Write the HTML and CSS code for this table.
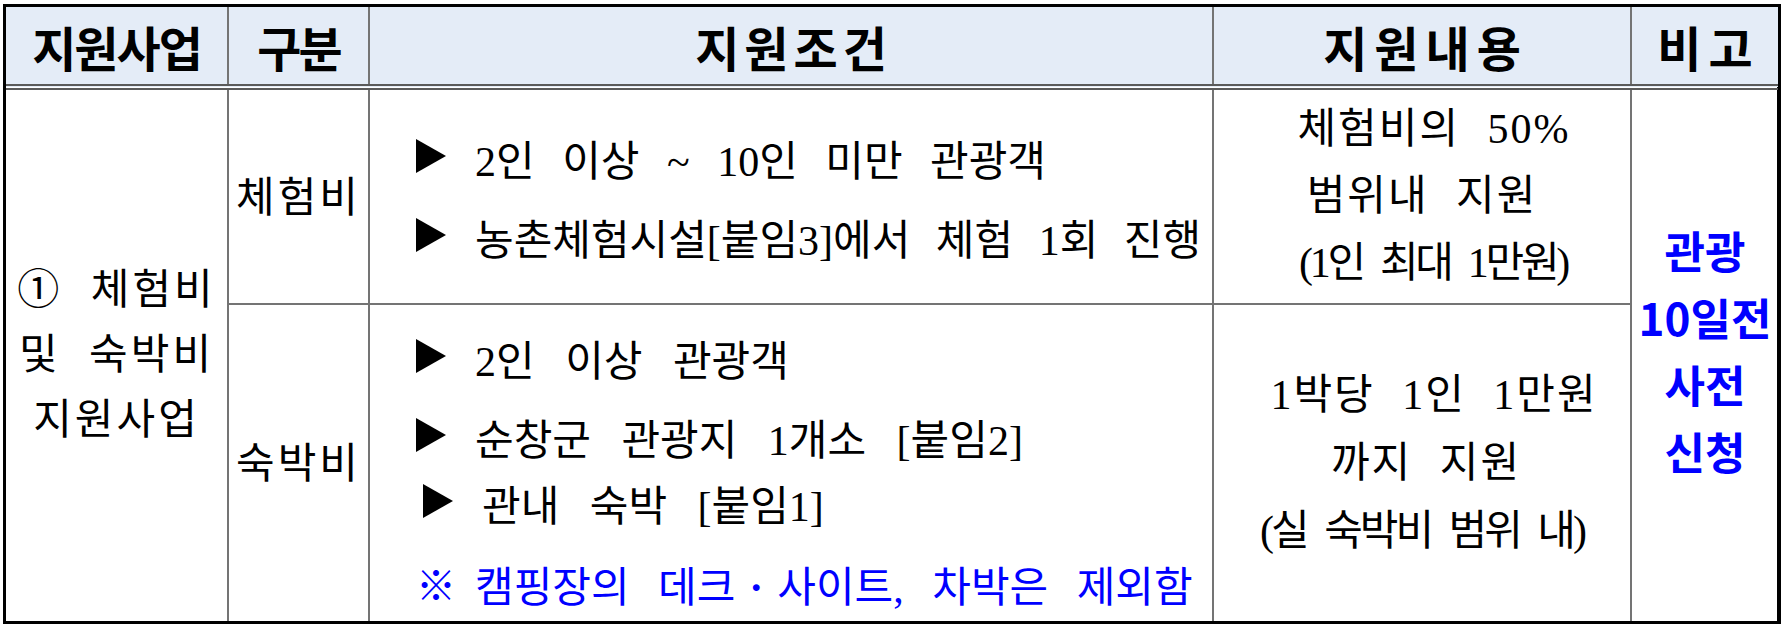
FILE: index.html
```html
<!DOCTYPE html>
<html lang="ko">
<head>
<meta charset="utf-8">
<title>지원사업</title>
<link rel="stylesheet" href="styles.css">
</head>
<body>
<div class="frame">
  <table class="grid">
    <colgroup>
      <col class="c1"><col class="c2"><col class="c3"><col class="c4"><col class="c5">
    </colgroup>
    <thead>
      <tr class="head">
        <th><span class="h-a">지원사업</span></th>
        <th><span class="h-b">구분</span></th>
        <th><span class="h-c">지원조건</span></th>
        <th><span class="h-e">지원내용</span></th>
        <th><span class="h-d">비고</span></th>
      </tr>
    </thead>
    <tbody>
      <tr class="r1">
        <td rowspan="2" class="biz">
          <div>① 체험비</div>
          <div>및 숙박비</div>
          <div>지원사업</div>
        </td>
        <td class="kind">체험비</td>
        <td class="cond cond-1">
          <div class="line"><span class="mk"><span class="tri"></span></span><span class="ws17">2인 이상 ~ 10인 미만 관광객</span></div>
          <div class="line"><span class="mk"><span class="tri"></span></span><span>농촌체험시설[붙임3]에서 체험 1회 진행</span></div>
        </td>
        <td class="detail d1">
          <div class="sh24">체험비의 50%</div>
          <div>범위내 지원</div>
          <div class="tight sh22">(1인 최대 1만원)</div>
        </td>
        <td rowspan="2" class="note">
          <div>관광</div>
          <div>10일전</div>
          <div>사전</div>
          <div>신청</div>
        </td>
      </tr>
      <tr class="r2">
        <td class="kind">숙박비</td>
        <td class="cond cond-2">
          <div class="line"><span class="mk"><span class="tri"></span></span><span class="wide">2인 이상 관광객</span></div>
          <div class="line l2"><span class="mk"><span class="tri"></span></span><span class="wider">순창군 관광지 1개소 [붙임2]</span></div>
          <div class="line l3"><span class="mk"><span class="tri"></span></span><span class="wide">관내 숙박 [붙임1]</span></div>
          <div class="line l4 blue"><span class="mk ref">※</span><span class="ws18">캠핑장의 데크<span class="dot">·</span>사이트, 차박은 제외함</span></div>
        </td>
        <td class="detail d2">
          <div class="sh24">1박당 1인 1만원</div>
          <div class="sh8">까지 지원</div>
          <div class="tighter">(실 숙박비 범위 내)</div>
        </td>
      </tr>
    </tbody>
  </table>
</div>
</body>
</html>
```

FILE: styles.css
```css
* { box-sizing: border-box; }

html, body {
  margin: 0;
  padding: 0;
  background: #ffffff;
}

body {
  padding: 4px 2px 0 3px;
  font-family: "Liberation Serif", "Noto Sans CJK KR", serif;
  color: #000;
}

.frame {
  width: 1778px;
  height: 620px;
  border: 3px solid #000;
  border-right-width: 4px;
}

.grid {
  width: 100%;
  height: 100%;
  border-collapse: collapse;
  border-style: hidden;
  table-layout: fixed;
}

.c1 { width: 222px; }
.c2 { width: 141px; }
.c3 { width: 844px; }
.c4 { width: 418px; }
.c5 { width: 147px; }

th, td {
  border: 2px solid #747474;
  padding: 0;
  text-align: center;
  vertical-align: middle;
}

.head { height: 80px; }
.r1 { height: 217px; }
.r2 { height: 317px; }

.head th {
  background: #e4ecf7;
  border-bottom: 6px double #5a5a5a;
  font-family: "Noto Sans CJK KR", sans-serif;
  font-weight: 700;
  font-size: 48px;
  line-height: 60px;
  white-space: nowrap;
}

.h-a { letter-spacing: -2px; }
.h-b { letter-spacing: -3px; }
.h-c { letter-spacing: 5px; margin-left: 5px; }
.h-e { letter-spacing: 7px; margin-left: 7px; }
.h-d { letter-spacing: 7px; margin-left: 7px; }

td {
  font-size: 42px;
  word-spacing: 15px;
  white-space: nowrap;
}

.biz div {
  line-height: 65px;
  letter-spacing: 3px;
}

.kind {
  line-height: 60px;
  padding-top: 2px;
  letter-spacing: 3px;
}

.cond {
  text-align: left;
  padding-left: 46px;
}

.cond-1 .line {
  height: 79px;
}

.cond-2 {
  vertical-align: top;
  padding-top: 19px;
}

.line {
  display: flex;
  align-items: center;
  height: 66px;
}

.l2 { margin-top: 13px; }
.l3 { margin-left: 7px; }
.l4 { margin-top: 15px; }

.ws17 { word-spacing: 17px; }
.ws18 { word-spacing: 18px; }
.wide { word-spacing: 20px; }
.wider { word-spacing: 20px; }

.mk {
  flex: none;
  width: 59px;
  display: flex;
  align-items: center;
}

.tri {
  display: block;
  width: 0;
  height: 0;
  margin-top: -3px;
  border-left: 30px solid #000;
  border-top: 17px solid transparent;
  border-bottom: 17px solid transparent;
}

.ref {
  font-family: "Noto Sans CJK KR", sans-serif;
  font-size: 40px;
}

.dot {
  display: inline-block;
  width: 42px;
  text-align: center;
  font-weight: 700;
}

.blue { color: #0000ff; }

.detail div { letter-spacing: 2px; }
.d1 div { line-height: 67px; }
.d2 div { line-height: 68px; }

.detail .tight { letter-spacing: -3.3px; word-spacing: 10px; }
.detail .tighter { letter-spacing: -3px; word-spacing: 10px; }
.sh8 { padding-left: 8px; }
.sh22 { padding-left: 22px; }
.sh24 { padding-left: 24px; }

.note {
  color: #0000ff;
  font-family: "Noto Sans CJK KR", sans-serif;
  font-weight: 700;
  font-size: 44px;
  word-spacing: 0;
  padding-bottom: 10px;
}

.note div {
  line-height: 67px;
  letter-spacing: 0;
}
```
